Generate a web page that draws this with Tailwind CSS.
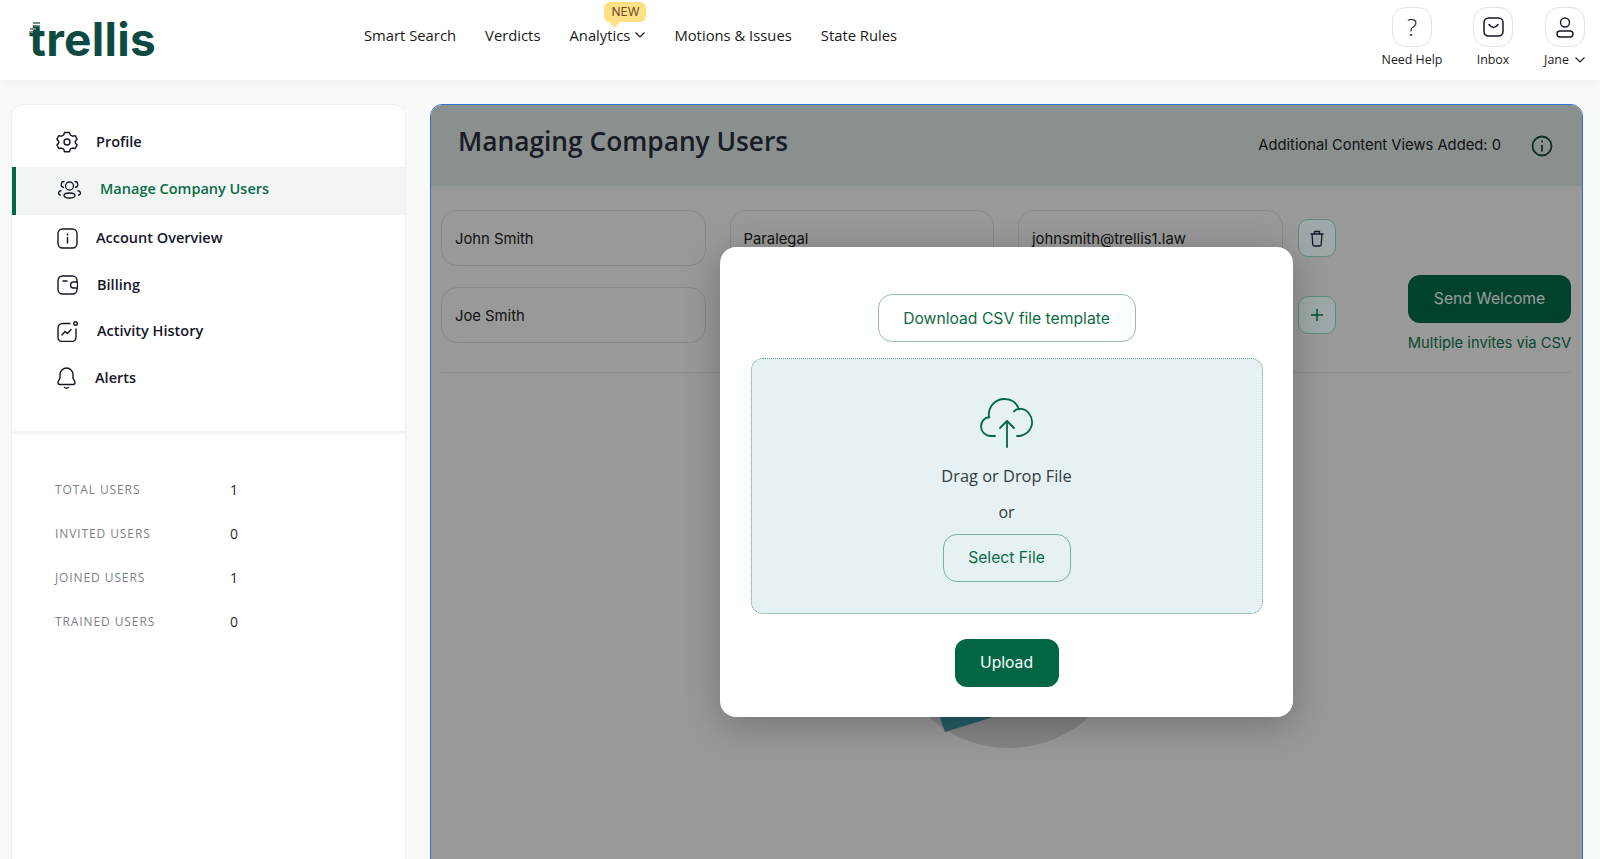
<!DOCTYPE html>
<html lang="en">
<head>
  <meta charset="UTF-8">
  <meta name="viewport" content="width=device-width, initial-scale=1.0">
  <title>Trellis - Managing Company Users</title>
  <script src="https://cdn.jsdelivr.net/npm/@tailwindcss/browser@4"></script>
</head>
<body class="bg-[#f8f9f9] h-[859px] overflow-hidden font-['Open_Sans',sans-serif] text-[#15172a]">

  <!-- top bar -->
  <header class="h-20 bg-white shadow-[0_2px_8px_rgba(0,0,0,0.05)] flex items-start relative">
    <div class="relative w-[364px] pl-[29px] pt-[12px] font-['Inter',sans-serif] font-bold text-[46px] leading-[54px] tracking-[0.3px] text-[#0f4a42]">
      trellis
      <svg class="absolute left-[30px] top-[22px] w-[11px] h-[12px]" viewBox="0 0 11 12" fill="#6f8f88"><rect x="3" y="0" width="7" height="2"/><rect x="4" y="3" width="6" height="1.500"/><rect x="0" y="6" width="6" height="2"/><rect x="0" y="9" width="3" height="2"/></svg>
    </div>
    <nav class="flex gap-[29px] pt-[24px] text-[14.800px] leading-[22px] font-medium text-[#1a1a1a]">
      <a>Smart Search</a>
      <a>Verdicts</a>
      <a class="relative flex items-center gap-[5px]">
        Analytics
        <svg class="w-[10px] h-[6px]" viewBox="0 0 10 6" fill="none" stroke="#1a1a1a" stroke-width="1.2"><path d="M0.5 0.5 5 5 9.5 0.5"/></svg>
        <span class="absolute left-[35px] top-[-22px] w-[42px] h-[20px] rounded-[6px] bg-[#ffe082] text-[#6d4c33] font-['Inter',sans-serif] font-normal text-[12px] leading-[20px] text-center">NEW</span>
        <span class="absolute left-[42px] top-[-5px] w-[7px] h-[7px] rotate-45 bg-[#ffe082]"></span>
      </a>
      <a>Motions &amp; Issues</a>
      <a>State Rules</a>
    </nav>
    <div class="ml-auto flex pt-[7px] pr-[15px] text-[12.400px] leading-[18px] font-medium text-[#1a1a1a]">
      <div class="w-[60px] flex flex-col items-center gap-[4px]">
        <div class="w-10 h-10 rounded-[14px] border border-[#e2e2e2] flex items-center justify-center font-['Open_Sans',sans-serif] font-light text-[24px]">?</div>
        <span class="whitespace-nowrap">Need Help</span>
      </div>
      <div class="w-[60px] ml-[21px] flex flex-col items-center gap-[4px]">
        <div class="w-10 h-10 rounded-[14px] border border-[#e2e2e2] flex items-center justify-center">
          <svg class="w-[21px] h-[20px]" viewBox="0 0 21 20" fill="none" stroke="#15172a" stroke-width="1.5"><rect x="1" y="1" width="19" height="18" rx="4.5"/><path d="M6 7.5c1.5 2 3 3 4.5 3S13.500 9.500 15 7.500" stroke-linecap="round"/></svg>
        </div>
        <span>Inbox</span>
      </div>
      <div class="w-[41px] ml-[21px] flex flex-col items-center gap-[4px]">
        <div class="w-10 h-10 rounded-[14px] border border-[#e2e2e2] flex items-center justify-center">
          <svg class="w-[18px] h-[21px]" viewBox="0 0 18 21" fill="none" stroke="#15172a" stroke-width="1.4"><circle cx="9" cy="5.500" r="4.500"/><rect x="1" y="14" width="16" height="6" rx="3"/></svg>
        </div>
        <span class="flex items-center gap-[6px] whitespace-nowrap">Jane
          <svg class="w-[10px] h-[6px]" viewBox="0 0 10 6" fill="none" stroke="#1a1a1a" stroke-width="1.1"><path d="M0.5 0.5 5 5 9.500 0.5"/></svg>
        </span>
      </div>
    </div>
  </header>

  <div class="flex items-start pl-[11px] pr-[17px] pt-[24px] gap-6">

    <!-- sidebar -->
    <aside class="w-[395px] h-[760px] shrink-0 bg-white border border-[#eeeeee] rounded-t-xl pt-[14px] text-[14.500px] leading-[22px] font-semibold">
      <a class="h-12 flex items-center pl-[44px] pb-[2px] gap-[18px]">
        <svg class="w-[22px] h-[22px]" viewBox="0 0 22 22" fill="none" stroke="#15172a" stroke-width="1.4" stroke-linejoin="round"><circle cx="11" cy="11" r="3"/><path d="M8.500 1.500h5l.8 2.500 2.300 1.200 2.500-.6 2 3.600-1.800 2 .0 1.800 1.800 2-2 3.600-2.500-.6-2.300 1.200-.8 2.500h-5l-.8-2.500-2.300-1.200-2.500.6-2-3.600 1.800-2 0-1.800-1.800-2 2-3.600 2.500.6 2.300-1.200z"/></svg>
        Profile
      </a>
      <a class="h-12 flex items-center pl-[41px] pb-[4px] gap-[19px] border-l-4 border-[#006643] bg-[#f1f6f5] text-[#0c6b45]">
        <svg class="w-[23px] h-[19px] ml-[1px]" viewBox="0 0 23 19" fill="none" stroke="#15172a" stroke-width="1.3"><circle cx="11.500" cy="6" r="4"/><ellipse cx="11.500" cy="15.500" rx="5.500" ry="2.500"/><path d="M6.500 1.500a3 3 0 0 0-.5 6M16.500 1.500a3 3 0 0 1 .5 6M3.500 10.500c-2 .5-3 1.500-3 2.500s1 2 2.500 2.300M19.500 10.500c2 .5 3 1.500 3 2.500s-1 2-2.500 2.300"/></svg>
        Manage Company Users
      </a>
      <a class="h-[46px] flex items-center pl-[45px] gap-[18px]">
        <svg class="w-[21px] h-[21px]" viewBox="0 0 21 21" fill="none" stroke="#15172a" stroke-width="1.4"><rect x="1" y="1" width="19" height="19" rx="4.500"/><path d="M10.500 9.500v5.500M10.500 6v1" stroke-linecap="round"/></svg>
        Account Overview
      </a>
      <a class="h-[46px] mt-[1px] flex items-center pl-[45px] gap-[19px]">
        <svg class="w-[21px] h-[20px]" viewBox="0 0 21 20" fill="none" stroke="#15172a" stroke-width="1.4"><path d="M20 7V5.500A4.500 4.500 0 0 0 15.500 1h-10A4.500 4.500 0 0 0 1 5.500v9A4.500 4.500 0 0 0 5.500 19h10a4.500 4.500 0 0 0 4.500-4.500V13"/><path d="M6 6h4" stroke-linecap="round"/><path d="M20.500 7h-4a3 3 0 0 0 0 6h4z"/></svg>
        Billing
      </a>
      <a class="h-[46px] flex items-center pl-[45px] gap-[19px]">
        <svg class="w-[21px] h-[21px]" viewBox="0 0 21 21" fill="none" stroke="#15172a" stroke-width="1.4" stroke-linecap="round"><path d="M13 2.500H5.500A4.500 4.500 0 0 0 1 7v9.500A4 4 0 0 0 5.500 20.500h9a4.500 4.500 0 0 0 4.500-4V8"/><circle cx="18.500" cy="2.500" r="1.800"/><path d="M5 14l3-3.500 2.500 2 3.500-4"/></svg>
        Activity History
      </a>
      <a class="h-12 flex items-center pl-[45px] gap-[19px]">
        <svg class="w-[19px] h-[22px]" viewBox="0 0 19 22" fill="none" stroke="#15172a" stroke-width="1.4" stroke-linecap="round"><path d="M9.500 1A6.500 6.500 0 0 0 3 7.500v3.500c0 1.500-2 2.500-2 4.500 0 1.500 1 2 2 2h13c1 0 2-.5 2-2 0-2-2-3-2-4.500V7.500A6.500 6.500 0 0 0 9.500 1z"/><path d="M7.500 20.500c1.200.8 2.800.8 4 0"/></svg>
        Alerts
      </a>

      <div class="mt-[29px] h-[3px] bg-[#f3f4f4]"></div>

      <dl class="pt-[34px] pl-[43px] font-normal">
        <div class="h-11 flex items-center"><dt class="w-[175px] text-[12px] tracking-[0.9px] text-[#7d7f8a]">TOTAL USERS</dt><dd class="text-[14px] text-[#2a2a2a]">1</dd></div>
        <div class="h-11 flex items-center"><dt class="w-[175px] text-[12px] tracking-[0.9px] text-[#7d7f8a]">INVITED USERS</dt><dd class="text-[14px] text-[#2a2a2a]">0</dd></div>
        <div class="h-11 flex items-center"><dt class="w-[175px] text-[12px] tracking-[0.9px] text-[#7d7f8a]">JOINED USERS</dt><dd class="text-[14px] text-[#2a2a2a]">1</dd></div>
        <div class="h-11 flex items-center"><dt class="w-[175px] text-[12px] tracking-[0.9px] text-[#7d7f8a]">TRAINED USERS</dt><dd class="text-[14px] text-[#2a2a2a]">0</dd></div>
      </dl>
    </aside>

    <!-- main panel -->
    <main class="relative flex-1 h-[760px] bg-white border border-[#2f6fd6] rounded-t-xl overflow-hidden">
      <div class="h-[81px] bg-[#e6f0ed] flex items-start pl-[27px] pr-[29px]">
        <h1 class="pt-[17px] text-[26.300px] leading-[38px] font-semibold text-[#2a3042]">Managing Company Users</h1>
        <span class="ml-auto pt-[29px] font-['Inter',sans-serif] text-[14.750px] leading-[22px] text-[#222222]">Additional Content Views Added: 0</span>
        <svg class="w-[22px] h-[22px] ml-[30px] mt-[30px]" viewBox="0 0 22 22" fill="none" stroke="#0f4a42" stroke-width="1.8"><circle cx="11" cy="11" r="9.500"/><path d="M11 10v6.500M11 5.500v1.800"/></svg>
      </div>

      <div class="ml-[10px] mr-[11px] pt-[24px] pb-[19px] flex justify-between border-b border-[#e6e6e6] font-['Inter',sans-serif] text-[14.800px] text-[#222222]">
        <div class="flex flex-col gap-[21px]">
          <div class="flex items-center gap-6">
            <div class="w-[264.500px] h-14 pl-[13px] pt-[2px] flex items-center border border-[#e2e4e4] rounded-2xl">John Smith</div>
            <div class="w-[264.500px] h-14 pl-[13px] pt-[2px] flex items-center border border-[#e2e4e4] rounded-2xl">Paralegal</div>
            <div class="w-[264.500px] h-14 pl-[13px] pt-[2px] flex items-center border border-[#e2e4e4] rounded-2xl">johnsmith@trellis1.law</div>
            <button class="relative z-10 w-[38px] h-[38px] -ml-[9px] rounded-[10px] border border-[#5f8a78] bg-[#9da9a9] flex items-center justify-center">
              <svg class="w-[14px] h-[17px]" viewBox="0 0 14 17" fill="none" stroke="#15172a" stroke-width="1.3"><path d="M0.500 4h13M4.500 4V1.500h5V4M2 4l.8 10.500a1.500 1.500 0 0 0 1.500 1.500h5.400a1.500 1.500 0 0 0 1.500-1.500L12 4"/></svg>
            </button>
          </div>
          <div class="flex items-center gap-6">
            <div class="w-[264.500px] h-14 pl-[13px] pt-[2px] flex items-center border border-[#e2e4e4] rounded-2xl">Joe Smith</div>
            <div class="w-[264.500px] h-14 border border-[#e2e4e4] rounded-2xl"></div>
            <div class="w-[264.500px] h-14 border border-[#e2e4e4] rounded-2xl"></div>
            <button class="relative z-10 w-[38px] h-[38px] -ml-[9px] rounded-[10px] border border-[#5f8a78] bg-[#9da9a9] flex items-center justify-center">
              <svg class="w-[14px] h-[14px]" viewBox="0 0 14 14" fill="none" stroke="#004d33" stroke-width="1.5"><path d="M7 1v12M1 7h12"/></svg>
            </button>
          </div>
        </div>
        <div class="w-[163px] pt-[65px] flex flex-col items-center">
          <button class="w-full h-12 rounded-xl bg-[#006f4b] text-white text-[15.700px]">Send Welcome</button>
          <a class="mt-[10px] text-[14.750px] whitespace-nowrap leading-[20px] text-[#0c7a50]">Multiple invites via CSV</a>
        </div>
      </div>

      <!-- pie chart under the modal -->
      <div class="absolute left-[459px] top-[405px] w-[238px] h-[238px] rounded-full bg-[#dcdee2]"></div>
      <svg class="absolute left-[504px] top-[599px] w-[70px] h-[30px]" viewBox="0 0 70 30"><polygon points="0,0 10,28 68,10 60,0" fill="#3f9aa8"/></svg>

      <!-- overlay + modal -->
      <div class="absolute inset-0 bg-black/40"></div>
      <div class="absolute z-20 left-[289px] top-[142px] w-[573px] h-[470px] bg-white rounded-2xl shadow-[0_8px_36px_rgba(0,0,0,0.25)] flex flex-col items-center pt-[47px] font-['Inter',sans-serif]">
        <button class="w-[258px] h-12 pt-[1px] rounded-[14px] border border-[#8fbfaa] bg-white text-[15.700px] text-[#0c6b45]">Download CSV file template</button>
        <div class="mt-[16px] w-[512px] h-[256px] rounded-xl border border-dotted border-[#5f9c8a] bg-[#e5f1f2] flex flex-col items-center pt-[39px]">
          <svg class="w-[54px] h-[50px]" viewBox="0 0 54 50" fill="none" stroke="#006643" stroke-width="1.800" stroke-linecap="round" stroke-linejoin="round">
            <path d="M15 38H11C5 38 1 33.500 1 28.500 1 23.500 4.500 19.500 9.500 19M9 19.500C7.500 9 15 1 24.500 1 31.500 1 37 5 39 11.500M34 13.500C37 9.500 45 10 49 15.500 54.500 22.500 53 35 40 38H37"/>
            <path d="M27 49V23M20 30l7-7 7 7"/>
          </svg>
          <p class="mt-[16px] font-['Open_Sans',sans-serif] text-[16.400px] leading-[24px] text-[#333a40]">Drag or Drop File</p>
          <p class="mt-[12px] font-['Open_Sans',sans-serif] text-[16px] leading-[24px] text-[#333a40]">or</p>
          <button class="mt-[10px] w-[128px] h-12 rounded-[14px] border border-[#7fb09c] text-[15.700px] text-[#0c6b45]">Select File</button>
        </div>
        <button class="mt-[25px] w-[104px] h-12 rounded-xl bg-[#006643] text-white text-[15.700px]">Upload</button>
      </div>
    </main>
  </div>

</body>
</html>
